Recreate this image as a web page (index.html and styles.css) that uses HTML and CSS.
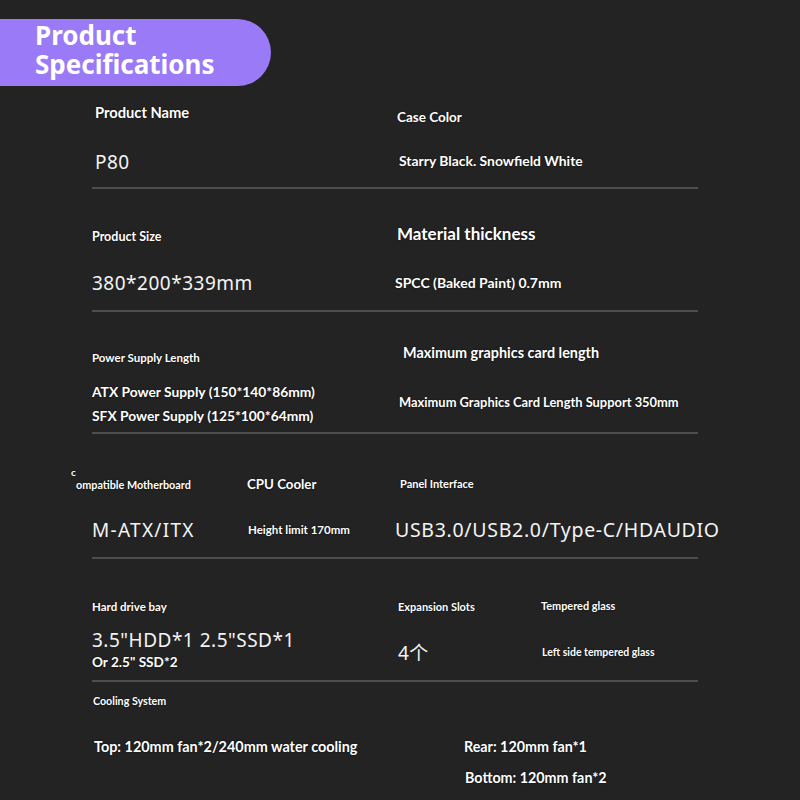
FILE: index.html
```html
<!DOCTYPE html>
<html lang="en">
<head>
    <meta charset="UTF-8">
    <meta name="viewport" content="width=device-width, initial-scale=1.0">
    <title>Product Specifications</title>
    <link rel="stylesheet" href="styles.css">
</head>
<body>
    <header class="title-badge">
        <h1 class="title"><span class="title-line">Product</span><span class="title-line">Specifications</span></h1>
    </header>

    <main class="sheet">
        <section class="row row-1 cols-2">
            <div class="cell c1-1">
                <div class="label name-label">Product Name</div>
                <div class="big p80">P80</div>
            </div>
            <div class="cell c1-2">
                <div class="label color-label">Case Color</div>
                <div class="value color-value">Starry Black. Snowfield White</div>
            </div>
        </section>

        <section class="row row-2 cols-2">
            <div class="cell c2-1">
                <div class="label size-label">Product Size</div>
                <div class="big size-value">380*200*339mm</div>
            </div>
            <div class="cell c2-2">
                <div class="label thick-label">Material thickness</div>
                <div class="value thick-value">SPCC (Baked Paint) 0.7mm</div>
            </div>
        </section>

        <section class="row row-3 cols-2">
            <div class="cell c3-1">
                <div class="label psu-label">Power Supply Length</div>
                <div class="value psu-value first">ATX Power Supply (150*140*86mm)</div>
                <div class="value psu-value">SFX Power Supply (125*100*64mm)</div>
            </div>
            <div class="cell c3-2">
                <div class="label gpu-label">Maximum graphics card length</div>
                <div class="value gpu-value">Maximum Graphics Card Length Support 350mm</div>
            </div>
        </section>

        <section class="row row-4 cols-3">
            <div class="cell c4-1">
                <div class="label stray-c">c</div>
                <div class="label board-label">ompatible Motherboard</div>
                <div class="big board-value">M-ATX/ITX</div>
            </div>
            <div class="cell c4-2">
                <div class="label cooler-label">CPU Cooler</div>
                <div class="value cooler-value">Height limit 170mm</div>
            </div>
            <div class="cell c4-3">
                <div class="label panel-label">Panel Interface</div>
                <div class="big panel-value">USB3.0/USB2.0/Type-C/HDAUDIO</div>
            </div>
        </section>

        <section class="row row-5 cols-3b">
            <div class="cell c5-1">
                <div class="label drive-label">Hard drive bay</div>
                <div class="big drive-value">3.5"HDD*1 2.5"SSD*1</div>
                <div class="value drive-alt">Or 2.5" SSD*2</div>
            </div>
            <div class="cell c5-2">
                <div class="label small-label">Expansion Slots</div>
                <div class="big slots-value">4个</div>
            </div>
            <div class="cell c5-3">
                <div class="label glass-label">Tempered glass</div>
                <div class="value glass-value">Left side tempered glass</div>
            </div>
        </section>

        <section class="row row-6">
            <div class="label cooling-label">Cooling System</div>
            <div class="cooling-grid">
                <div class="value fan-value fan-top">Top: 120mm fan*2/240mm water cooling</div>
                <div class="fan-side">
                    <div class="value fan-value">Rear: 120mm fan*1</div>
                    <div class="value fan-value fan-bottom">Bottom: 120mm fan*2</div>
                </div>
            </div>
        </section>
    </main>
</body>
</html>
```

FILE: styles.css
```css
body {
    margin: 0;
    background-color: #232323;
    color: #fff;
    font-family: Lato, "Liberation Sans", sans-serif;
    width: 800px;
    height: 800px;
    overflow: hidden;
}

/* header badge */
.title-badge {
    box-sizing: border-box;
    width: 271px;
    height: 67px;
    margin-top: 19px;
    padding: 4px 0 0 35px;
    background: #9a7af6;
    border-radius: 0 34px 34px 0;
}

.title {
    margin: 0;
    font-family: "Noto Sans", "Open Sans", sans-serif;
    font-weight: 700;
    font-size: 26px;
    color: #fff;
}

.title-line {
    display: block;
    height: 29px;
    line-height: 24px;
}

/* spec sheet */
.sheet {
    margin-left: 92px;
    width: 606px;
}

.row {
    border-bottom: 2px solid #4d4d4d;
}

.row-1 { height: 101px; }
.row-2 { height: 121px; }
.row-3 { height: 120px; }
.row-4 { height: 123px; }
.row-5 { height: 121px; }
.row-6 { border-bottom: none; height: 118px; }

.cols-2 {
    display: grid;
    grid-template-columns: 305px 1fr;
}

.cols-3 {
    display: grid;
    grid-template-columns: 155px 150px 1fr;
}

.cols-3b {
    display: grid;
    grid-template-columns: 306px 143px 1fr;
}

.label {
    font-weight: 700;
    font-size: 11px;
    line-height: 14px;
    white-space: nowrap;
    text-shadow: 0 0 2px rgba(0, 0, 0, 0.7);
}

.value {
    font-weight: 700;
    font-size: 13px;
    line-height: 18px;
    white-space: nowrap;
    text-shadow: 0 0 2px rgba(0, 0, 0, 0.7);
}

.big {
    font-family: "Noto Sans", "Open Sans", "Noto Sans CJK SC", sans-serif;
    font-weight: 400;
    font-size: 19px;
    line-height: 26px;
    letter-spacing: 0.5px;
    white-space: nowrap;
    color: #f4f4f4;
}

/* row 1 */
.c1-1 { padding: 17px 0 0 3px; }
.name-label { font-size: 14.7px; line-height: 18px; }
.p80 { margin-top: 28px; }

.c1-2 { padding-top: 22px; }
.color-label { font-size: 13.5px; line-height: 18px; }
.color-value { margin: 26px 0 0 2px; font-size: 13.9px; }

/* row 2 */
.c2-1 { padding-top: 40px; }
.size-label { font-size: 12.5px; line-height: 16px; }
.size-value { margin-top: 25px; }

.c2-2 { padding-top: 35px; }
.thick-label { font-size: 17px; line-height: 20px; }
.thick-value { margin: 30px 0 0 -2px; font-size: 14px; }

/* row 3 */
.c3-1 { padding-top: 38px; }
.psu-label { font-size: 11.5px; line-height: 16px; }
.psu-value { font-size: 13.8px; line-height: 24px; }
.psu-value.first { margin-top: 14px; }

.c3-2 { padding-top: 32px; }
.gpu-label { margin-left: 6px; font-size: 14.4px; line-height: 18px; }
.gpu-value { margin: 31px 0 0 2px; font-size: 12.9px; }

/* row 4 */
.c4-1 { padding-top: 33px; }
.stray-c { margin-left: -21px; font-size: 10px; line-height: 11px; }
.board-label { margin-left: -16px; font-size: 10.8px; }
.board-value { margin-top: 25px; letter-spacing: 1.3px; }

.c4-2 { padding-top: 41px; }
.cooler-label { font-size: 13.3px; line-height: 18px; }
.cooler-value { margin: 30px 0 0 1px; font-size: 11.5px; line-height: 14px; }

.c4-3 { padding-top: 43px; }
.panel-label { margin-left: 3px; }
.panel-value { margin: 26px 0 0 -2px; font-size: 19.5px; letter-spacing: 0.7px; }

/* row 5 */
.small-label { font-size: 11px; }

.c5-1 { padding-top: 41px; }
.drive-label { font-size: 11.5px; }
.drive-value { margin-top: 13px; }
.drive-alt { font-size: 13.6px; }

.c5-2 { padding-top: 41px; }
.slots-value { margin-top: 26px; }

.c5-3 { padding-top: 40px; }
.glass-label { font-size: 10.9px; }
.glass-value { margin: 32px 0 0 1px; font-size: 10.5px; line-height: 14px; }

/* row 6 */
.cooling-label { padding: 12px 0 0 1px; font-size: 10.7px; }

.cooling-grid {
    display: grid;
    grid-template-columns: 372px 1fr;
    margin-top: 30px;
}

.fan-value { font-size: 14.3px; }
.fan-top { margin-left: 2px; font-size: 14.4px; }
.fan-bottom { margin: 13px 0 0 1px; }
```
